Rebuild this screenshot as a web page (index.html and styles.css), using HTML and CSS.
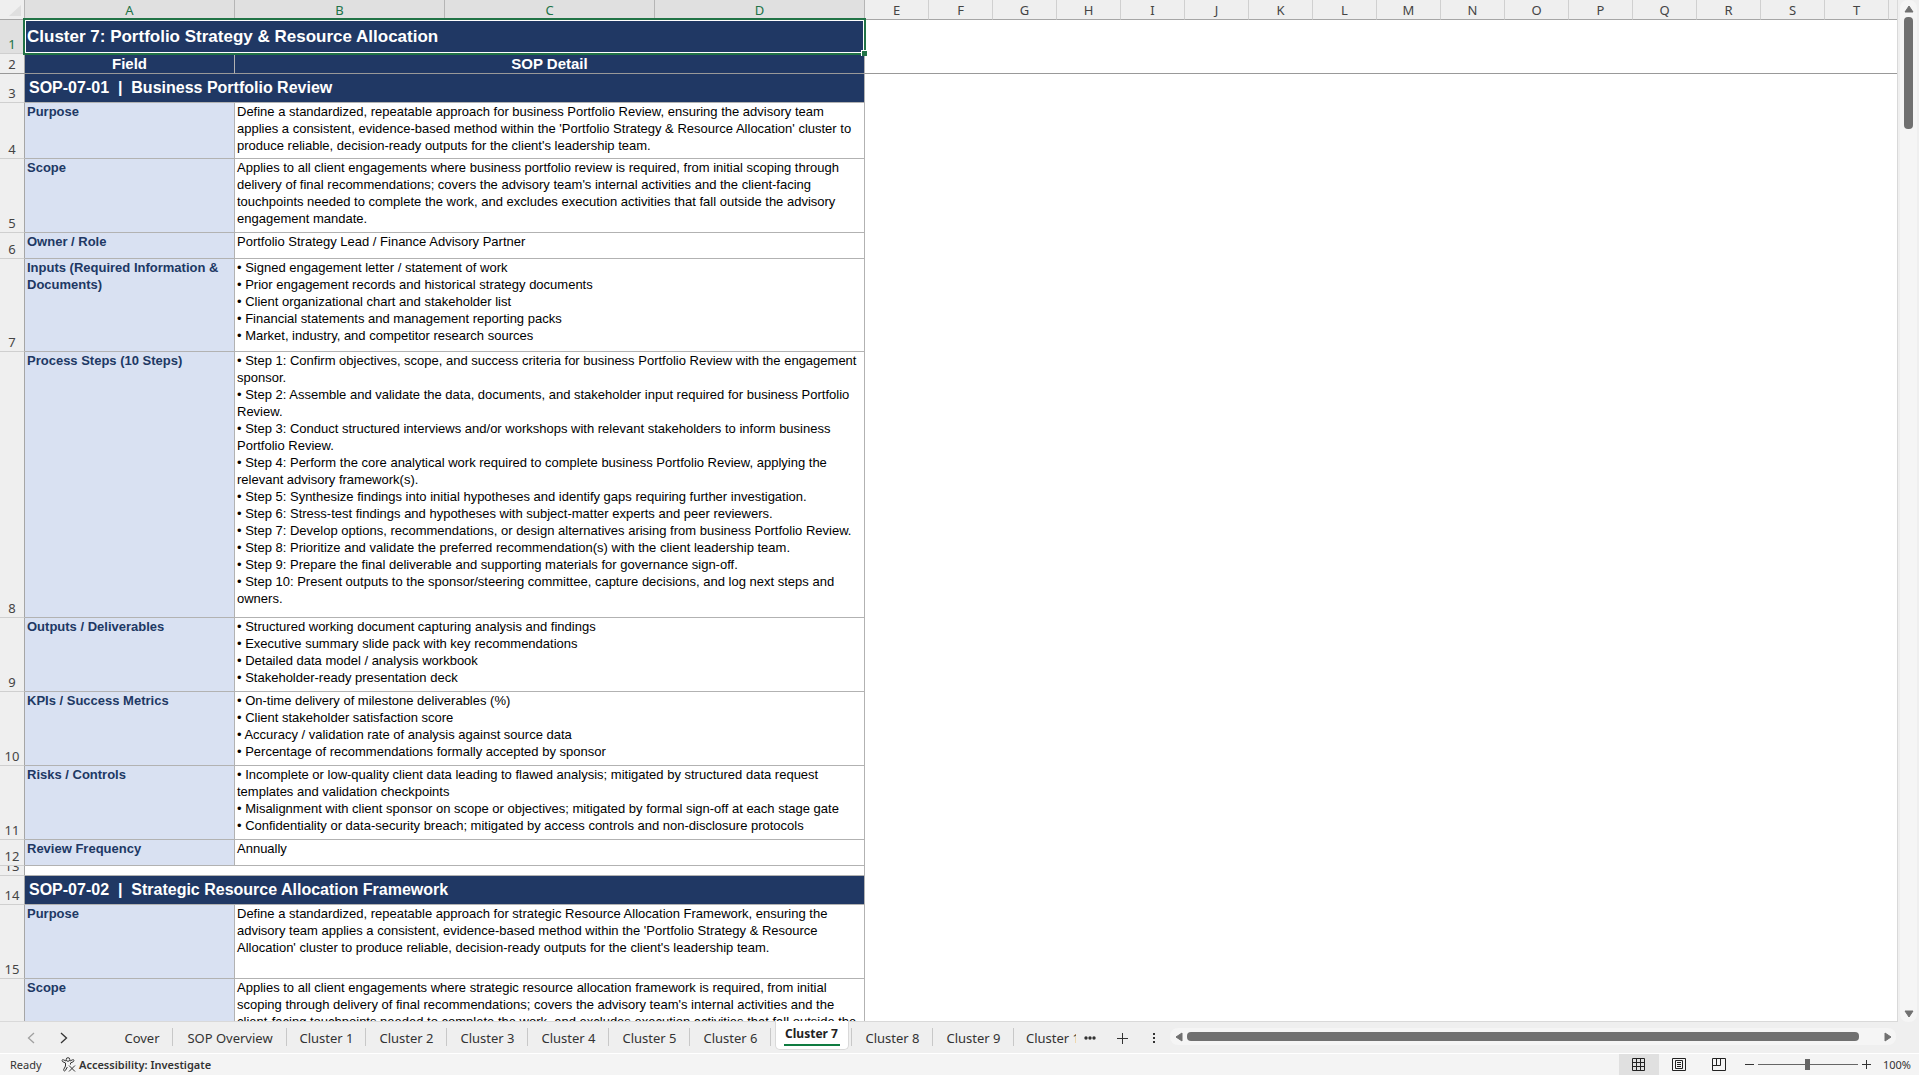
FILE: index.html
```html
<!DOCTYPE html>
<html lang="en">
<head>
<meta charset="utf-8">
<title>Cluster 7: Portfolio Strategy &amp; Resource Allocation</title>
<link rel="stylesheet" href="styles.css">
</head>
<body>
<main class="workspace">
  <div class="sheet">
    <table class="grid">
      <colgroup>
        <col class="col-num"><col class="col-main"><col class="col-main"><col class="col-main"><col class="col-main">
        <col class="col-std" span="16"><col>
      </colgroup>
      <thead>
        <tr>
          <th class="corner"><svg width="24" height="19" aria-hidden="true"><path d="M21 5v11H9z" fill="#dfdfdf"/></svg></th>
          <th class="picked">A</th><th class="picked">B</th><th class="picked">C</th><th class="picked last">D</th>
          <th>E</th><th>F</th><th>G</th><th>H</th><th>I</th><th>J</th><th>K</th><th>L</th><th>M</th><th>N</th><th>O</th><th>P</th><th>Q</th><th>R</th><th>S</th><th>T</th><th class="rest"></th>
        </tr>
      </thead>
      <tbody>
        <tr class="h-title"><th class="num active">1</th><td colspan="4" class="title"><div class="selection">Cluster 7: Portfolio Strategy &amp; Resource Allocation<i class="handle"></i></div></td><td colspan="17" class="blank"></td></tr>
        <tr class="h-head frozen"><th class="num">2</th><td class="head">Field</td><td colspan="3" class="head">SOP Detail</td><td colspan="17" class="blank"></td></tr>
        <tr class="h-section"><th class="num">3</th><td colspan="4" class="section">SOP-07-01&nbsp; |&nbsp; Business Portfolio Review</td><td colspan="17" class="blank"></td></tr>
        <tr class="h-3"><th class="num">4</th><td class="field">Purpose</td><td colspan="3" class="detail">Define a standardized, repeatable approach for business Portfolio Review, ensuring the advisory team<br>applies a consistent, evidence-based method within the 'Portfolio Strategy &amp; Resource Allocation' cluster to<br>produce reliable, decision-ready outputs for the client's leadership team.</td><td colspan="17" class="blank"></td></tr>
        <tr class="h-4"><th class="num">5</th><td class="field">Scope</td><td colspan="3" class="detail">Applies to all client engagements where business portfolio review is required, from initial scoping through<br>delivery of final recommendations; covers the advisory team's internal activities and the client-facing<br>touchpoints needed to complete the work, and excludes execution activities that fall outside the advisory<br>engagement mandate.</td><td colspan="17" class="blank"></td></tr>
        <tr class="h-1"><th class="num">6</th><td class="field">Owner / Role</td><td colspan="3" class="detail">Portfolio Strategy Lead / Finance Advisory Partner</td><td colspan="17" class="blank"></td></tr>
        <tr class="h-5"><th class="num">7</th><td class="field">Inputs (Required Information &amp;<br>Documents)</td><td colspan="3" class="detail">• Signed engagement letter / statement of work<br>• Prior engagement records and historical strategy documents<br>• Client organizational chart and stakeholder list<br>• Financial statements and management reporting packs<br>• Market, industry, and competitor research sources</td><td colspan="17" class="blank"></td></tr>
        <tr class="h-15"><th class="num">8</th><td class="field">Process Steps (10 Steps)</td><td colspan="3" class="detail">• Step 1: Confirm objectives, scope, and success criteria for business Portfolio Review with the engagement<br>sponsor.<br>• Step 2: Assemble and validate the data, documents, and stakeholder input required for business Portfolio<br>Review.<br>• Step 3: Conduct structured interviews and/or workshops with relevant stakeholders to inform business<br>Portfolio Review.<br>• Step 4: Perform the core analytical work required to complete business Portfolio Review, applying the<br>relevant advisory framework(s).<br>• Step 5: Synthesize findings into initial hypotheses and identify gaps requiring further investigation.<br>• Step 6: Stress-test findings and hypotheses with subject-matter experts and peer reviewers.<br>• Step 7: Develop options, recommendations, or design alternatives arising from business Portfolio Review.<br>• Step 8: Prioritize and validate the preferred recommendation(s) with the client leadership team.<br>• Step 9: Prepare the final deliverable and supporting materials for governance sign-off.<br>• Step 10: Present outputs to the sponsor/steering committee, capture decisions, and log next steps and<br>owners.</td><td colspan="17" class="blank"></td></tr>
        <tr class="h-4"><th class="num">9</th><td class="field">Outputs / Deliverables</td><td colspan="3" class="detail">• Structured working document capturing analysis and findings<br>• Executive summary slide pack with key recommendations<br>• Detailed data model / analysis workbook<br>• Stakeholder-ready presentation deck</td><td colspan="17" class="blank"></td></tr>
        <tr class="h-4"><th class="num">10</th><td class="field">KPIs / Success Metrics</td><td colspan="3" class="detail">• On-time delivery of milestone deliverables (%)<br>• Client stakeholder satisfaction score<br>• Accuracy / validation rate of analysis against source data<br>• Percentage of recommendations formally accepted by sponsor</td><td colspan="17" class="blank"></td></tr>
        <tr class="h-4"><th class="num">11</th><td class="field">Risks / Controls</td><td colspan="3" class="detail">• Incomplete or low-quality client data leading to flawed analysis; mitigated by structured data request<br>templates and validation checkpoints<br>• Misalignment with client sponsor on scope or objectives; mitigated by formal sign-off at each stage gate<br>• Confidentiality or data-security breach; mitigated by access controls and non-disclosure protocols</td><td colspan="17" class="blank"></td></tr>
        <tr class="h-1"><th class="num">12</th><td class="field">Review Frequency</td><td colspan="3" class="detail">Annually</td><td colspan="17" class="blank"></td></tr>
        <tr class="h-gap"><th class="num"><div class="squeezed">13</div></th><td colspan="4" class="gap"></td><td colspan="17" class="blank"></td></tr>
        <tr class="h-section"><th class="num">14</th><td colspan="4" class="section">SOP-07-02&nbsp; |&nbsp; Strategic Resource Allocation Framework</td><td colspan="17" class="blank"></td></tr>
        <tr class="h-4"><th class="num">15</th><td class="field">Purpose</td><td colspan="3" class="detail">Define a standardized, repeatable approach for strategic Resource Allocation Framework, ensuring the<br>advisory team applies a consistent, evidence-based method within the 'Portfolio Strategy &amp; Resource<br>Allocation' cluster to produce reliable, decision-ready outputs for the client's leadership team.</td><td colspan="17" class="blank"></td></tr>
        <tr class="h-4"><th class="num">16</th><td class="field">Scope</td><td colspan="3" class="detail">Applies to all client engagements where strategic resource allocation framework is required, from initial<br>scoping through delivery of final recommendations; covers the advisory team's internal activities and the<br>client-facing touchpoints needed to complete the work, and excludes execution activities that fall outside the<br>advisory engagement mandate.</td><td colspan="17" class="blank"></td></tr>
      </tbody>
    </table>
  </div>
  <div class="vscroll">
    <button class="arrow" aria-label="Scroll up"><svg width="10" height="8"><path d="M5 1 9 7H1z" fill="#707070" stroke="#707070" stroke-linejoin="round"/></svg></button>
    <div class="vthumb"></div>
    <button class="arrow down" aria-label="Scroll down"><svg width="10" height="8"><path d="M5 7 9 1H1z" fill="#707070" stroke="#707070" stroke-linejoin="round"/></svg></button>
  </div>
</main>

<nav class="tabbar" aria-label="Sheets">
  <div class="tabnav">
    <button aria-label="Previous sheets"><svg width="8" height="12"><path d="M7 1 1.500 6 7 11" fill="none" stroke="#a0a0a0" stroke-width="1.300"/></svg></button>
    <button aria-label="Next sheets"><svg width="8" height="12"><path d="M1 1 6.500 6 1 11" fill="none" stroke="#333" stroke-width="1.300"/></svg></button>
  </div>
  <div class="tabs">
    <button class="tab cover">Cover</button>
    <button class="tab overview">SOP Overview</button>
    <button class="tab first">Cluster 1</button>
    <button class="tab">Cluster 2</button>
    <button class="tab">Cluster 3</button>
    <button class="tab">Cluster 4</button>
    <button class="tab">Cluster 5</button>
    <button class="tab">Cluster 6</button>
    <button class="tab current"><span class="face"><span class="label">Cluster 7</span></span></button>
    <button class="tab">Cluster 8</button>
    <button class="tab">Cluster 9</button>
    <button class="tab cut">Cluster 10</button>
  </div>
  <div class="tabtools">
    <button aria-label="More sheets"><svg width="12" height="12"><g fill="#333"><circle cx="2" cy="6" r="1.700"/><circle cx="6" cy="6" r="1.700"/><circle cx="10" cy="6" r="1.700"/></g></svg></button>
    <button aria-label="New sheet"><svg width="12" height="12"><path d="M6.500 1v11M1 6.500h11" stroke="#333"/></svg></button>
    <button aria-label="Resize tabs"><svg width="12" height="12"><path d="M5 1h2v2H5zM5 5h2v2H5zM5 9h2v2H5z" fill="#333"/></svg></button>
  </div>
  <div class="hscroll">
    <button class="arrow" aria-label="Scroll left"><svg width="8" height="10"><path d="M1 5 7 1v8z" fill="#707070" stroke="#707070" stroke-linejoin="round"/></svg></button>
    <div class="htrack"><div class="hthumb"></div></div>
    <button class="arrow" aria-label="Scroll right"><svg width="8" height="10"><path d="M7 5 1 1v8z" fill="#707070" stroke="#707070" stroke-linejoin="round"/></svg></button>
  </div>
</nav>

<footer class="status">
  <span class="ready">Ready</span>
  <button class="access"><svg width="15" height="15" viewBox="0 0 15 15" fill="none" stroke="#333"><circle cx="7" cy="2.500" r="1.800"/><path d="M5 4 2.500 2.800C1 2.300.3 4 1.700 4.700L4.500 6v3L2.700 12.500c-.5 1.500 1.200 2 1.800.8L6.300 10M9 4l2.500-1.200c1.500-.5 2.200 1.200.8 1.900L9.500 6v1.500M8 8.500l6 6M14 8.500l-6 6"/></svg>Accessibility: Investigate</button>
  <div class="views">
    <button class="view on" aria-label="Normal view"><svg width="14" height="14" fill="none" stroke="#222"><path d="M.5.500h12v12H.5zM.5 4.500h12M.5 8.500h12M4.500.500v12M8.500.500v12"/></svg></button>
    <button class="view" aria-label="Page layout"><svg width="14" height="14" fill="none" stroke="#222"><path d="M.5.500h13v12H.5zM3.500 2.500h7v8h-7zM5 4.500h4M5 6.500h4M5 8.500h4"/></svg></button>
    <button class="view" aria-label="Page break preview"><svg width="14" height="14" fill="none" stroke="#222"><path d="M.5.500h13v12H.5zM.5 7.500h8v-7M4.500.500v7"/></svg></button>
  </div>
  <button class="zoom-step" aria-label="Zoom out"><svg width="9" height="9"><path d="M0 4.500h9" stroke="#333"/></svg></button>
  <input class="zoom" type="range" min="0" max="100" value="50" aria-label="Zoom">
  <button class="zoom-step" aria-label="Zoom in"><svg width="9" height="9"><path d="M0 4.500h9M4.500 0v9" stroke="#333"/></svg></button>
  <button class="percent">100%</button>
</footer>
</body>
</html>
```
FILE: styles.css
```css
* { box-sizing: border-box; }

body {
  margin: 0;
  height: 100vh;
  display: flex;
  flex-direction: column;
  overflow: hidden;
  background: #efefef;
  color: #333;
  font-family: "Noto Sans", "Open Sans", sans-serif;
  font-size: 13px;
}

button {
  display: flex;
  align-items: center;
  justify-content: center;
  margin: 0;
  padding: 0;
  border: 0;
  background: none;
  color: inherit;
  font: inherit;
  white-space: nowrap;
}

svg { display: block; }

.workspace { flex: 1; min-height: 0; display: flex; }

/* Worksheet */
.sheet {
  flex: 1;
  min-width: 0;
  overflow: hidden;
  background: #fff;
  border-right: 1px solid #d9d9d9;
  border-bottom: 1px solid #d9d9d9;
}

.grid {
  width: 100%;
  table-layout: fixed;
  border-collapse: separate;
  border-spacing: 0;
}
.col-num { width: 25px; }
.col-main { width: 210px; }
.col-std { width: 64px; }

.grid th, .grid td {
  padding: 0;
  border: 0 solid #b2b2b2;
  border-width: 0 1px 1px 0;
  white-space: nowrap;
}
.grid th { font-weight: 400; background: #efefef; color: #444; }

.grid thead th {
  height: 20px;
  padding-top: 2px;
  line-height: 17px;
  border-color: #d0d0d0;
  border-bottom-color: #a6a6a6;
}
.grid thead .picked { background: #e0e0e0; color: #217346; border-right-color: #b5b5b5; }
.grid thead .corner { padding: 0; border-right-color: #b5b5b5; }
.grid thead .rest { border-right: 0; }

.grid .num {
  vertical-align: bottom;
  line-height: 17px;
  border-bottom-color: #cfcfcf;
  border-right-color: #a6a6a6;
}
.grid .num.active { background: #e0e0e0; color: #217346; }
.squeezed { height: 9px; display: flex; align-items: flex-end; justify-content: center; overflow: hidden; }

.grid .blank { border: 0; }
.grid .frozen th, .grid .frozen td, .grid .frozen .blank { border-bottom: 1px solid #999; }

.h-title > * { height: 34px; }
.h-head > * { height: 20px; }
.h-section > * { height: 29px; }
.h-1 > * { height: 26px; }
.h-3 > * { height: 56px; }
.h-4 > * { height: 74px; }
.h-5 > * { height: 93px; }
.h-15 > * { height: 266px; }
.h-gap > * { height: 10px; }

.title, .head, .section, .field, .detail { font-family: "Liberation Sans", Arial, sans-serif; }
.title, .head, .section { background: #203864; color: #fff; font-weight: 700; }
.grid .title { font-size: 17px; border: 0; }
.selection {
  position: relative;
  height: 37px;
  margin: -2px -1px -1px -2px;
  padding: 0 2px;
  border: 2px solid #217346;
  box-shadow: inset 0 0 0 1px #fff;
  line-height: 33px;
}
.handle {
  position: absolute;
  right: -3px;
  bottom: -3px;
  width: 6px;
  height: 6px;
  background: #217346;
  border: 1px solid #fff;
  border-width: 1px 0 0 1px;
}
.head { font-size: 15px; text-align: center; line-height: 18px; }
.section { font-size: 16px; line-height: 27px; }
.grid .section { padding-left: 4px; vertical-align: top; }

.field, .detail { vertical-align: top; line-height: 17px; }
.grid .field, .grid .detail { padding-left: 2px; }
.field { background: #d9e1f2; color: #203864; font-weight: 700; }
.detail { color: #000; }

/* Vertical scroll bar */
.vscroll {
  width: 17px;
  margin: 0 2px 0 2px;
  display: flex;
  flex-direction: column;
  align-items: center;
  background: #f5f5f5;
  border-radius: 8px;
}
.arrow { flex: none; height: 17px; }
.vthumb { width: 9px; height: 112px; border-radius: 4px; background: #707070; }
.down { margin-top: auto; }

/* Sheet tabs */
.tabbar { height: 31px; flex: none; display: flex; }
.tabnav { width: 111px; padding-left: 27px; display: flex; gap: 25px; }
.tabs { display: flex; }
.tab { position: relative; width: 81px; height: 31px; }
.tab::after {
  content: "";
  position: absolute;
  right: 0;
  top: 6px;
  width: 1px;
  height: 18px;
  background: #c8c8c8;
}
.cover { width: 62px; }
.overview { width: 114px; }
.first { width: 79px; }
.current { align-items: flex-start; }
.face {
  width: 74px;
  height: 29px;
  margin-top: -1px;
  padding: 2px 8px 0;
  background: #fff;
  border: 1px solid #d9d9d9;
  border-top: 0;
  border-radius: 0 0 5px 5px;
}
.label { display: block; height: 23px; line-height: 21px; font-size: 12px; font-weight: 700; color: #222; border-bottom: 2px solid #107c41; }
.cut { width: 62px; padding-left: 12px; justify-content: flex-start; overflow: hidden; }
.cut::after { display: none; }
.tabtools { display: flex; gap: 20px; padding: 0 10px 0 8px; }
.hscroll {
  flex: 1;
  height: 17px;
  margin: 6px 23px 0 0;
  padding: 0 4px 0 5px;
  display: flex;
  align-items: center;
  gap: 4px;
  border-radius: 8px;
  background: #f5f5f5;
}
.htrack { flex: 1; }
.hthumb { width: 97%; height: 9px; border-radius: 4px; background: #707070; }

/* Status bar */
.status {
  flex: none;
  height: 22px;
  display: flex;
  align-items: center;
  border-top: 1px solid #fff;
  background: #f4f4f4;
  font-size: 11px;
}
.ready { margin-left: 10px; width: 51px; }
.access { gap: 3px; font-weight: 600; }
.views { margin-left: auto; display: flex; }
.view { width: 40px; height: 21px; }
.on { background: #e0e0e0; }
.zoom-step { width: 9px; height: 21px; margin: 0 4px; }
.views + .zoom-step { margin-left: 6px; }
.zoom { appearance: none; width: 100px; height: 21px; margin: 0; background: linear-gradient(#666, #666) center / 100% 1px no-repeat; }
.zoom::-webkit-slider-thumb { appearance: none; width: 5px; height: 11px; background: #666; }
.percent { margin: 0 8px 0 8px; }
```
